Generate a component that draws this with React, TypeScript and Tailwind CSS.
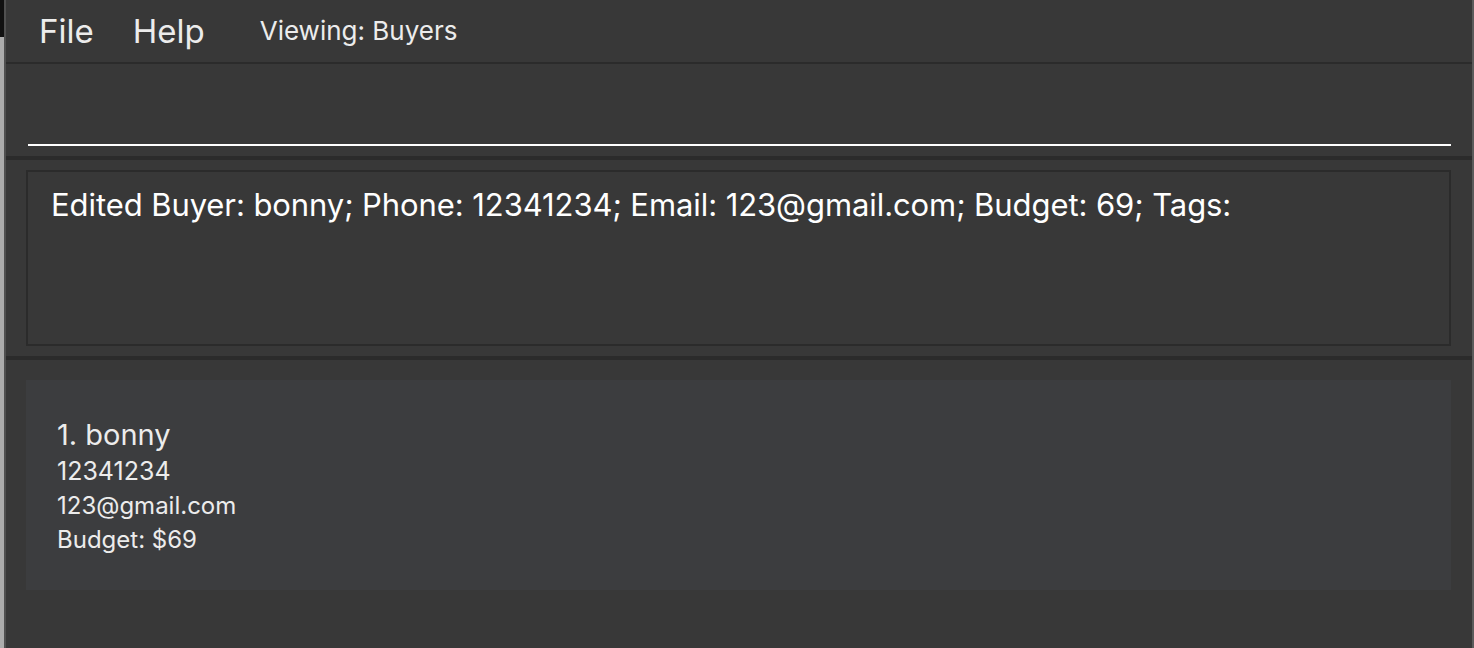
import React from "react";

export default function App() {
  return (
    <div
      className="w-full h-[648px] flex bg-[#383838] overflow-hidden"
      style={{ fontFamily: "Inter, 'Noto Sans', sans-serif" }}
    >
      <div className="w-[4px] flex flex-col">
        <div className="h-[37px] bg-[#111111]" />
        <div className="flex-1 bg-[#acacac]" />
      </div>
      <div className="w-[2px] bg-[#505050]" />
      <div className="flex-1 flex flex-col">
        {/* menu bar */}
        <div className="h-[64px] flex items-center border-b-2 border-[#2b2b2b]">
          <span className="ml-[33px] text-[33px] text-[#ececec] leading-none">File</span>
          <span className="ml-[39px] text-[33px] text-[#ececec] leading-none">Help</span>
          <span className="ml-[55px] text-[26px] text-[#ececec] leading-none">Viewing: Buyers</span>
        </div>
        {/* command box */}
        <div className="h-[92px] flex flex-col justify-end pl-[22px] pr-[21px] pb-[10px]">
          <div className="h-[2px] bg-white" />
        </div>
        <div className="h-[4px] bg-[#2b2b2b]" />
        {/* result display */}
        <div className="pt-[10px] pb-[10px] pl-[20px] pr-[21px]">
          <div className="h-[176px] border-2 border-[#2b2b2b] pl-[23px] pt-[14px]">
            <p className="text-[31px] text-white leading-tight tracking-[-0.08px]">
              Edited Buyer: bonny; Phone: 12341234; Email: 123@gmail.com; Budget: 69; Tags:
            </p>
          </div>
        </div>
        <div className="h-[4px] bg-[#2b2b2b]" />
        {/* list */}
        <div className="pt-[20px] pl-[20px] pr-[21px]">
          <div className="h-[210px] bg-[#3c3d3f] pl-[31px] pt-[38px] text-[#ececec]">
            <div className="text-[29px] leading-[34px]">1. bonny</div>
            <div className="mt-[2px] text-[25px] leading-[34px]">12341234</div>
            <div className="text-[24px] leading-[35px]">123@gmail.com</div>
            <div className="text-[24px] leading-[34px]">Budget: $69</div>
          </div>
        </div>
      </div>
      <div className="w-[2px] bg-[#5b5b5b]" />
    </div>
  );
}
